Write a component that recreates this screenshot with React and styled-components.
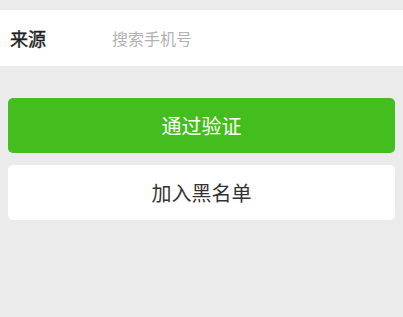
import styled, { createGlobalStyle } from "styled-components";

const Global = createGlobalStyle`
  html, body {
    margin: 0;
    padding: 0;
    background: #ebebeb;
    font-family: "Noto Sans CJK SC", "Noto Sans", sans-serif;
  }
`;

const Page = styled.div`
  padding-top: 10px;
  display: flex;
  flex-direction: column;
`;

const Row = styled.div`
  height: 56px;
  background: #fff;
  display: flex;
  align-items: center;
  padding-left: 10px;
`;

const Label = styled.span`
  width: 102px;
  font-size: 18px;
  font-weight: 400;
  color: #222;
  -webkit-text-stroke: 0.4px #222;
`;

const Search = styled.input`
  border: none;
  outline: none;
  padding: 0;
  background: transparent;
  font-family: inherit;
  font-size: 16px;
  color: #333;
  flex: 1;
  &::placeholder {
    color: #b2b2b2;
  }
`;

const Actions = styled.div`
  padding: 32px 8px 0;
  display: flex;
  flex-direction: column;
  gap: 12px;
`;

const Button = styled.button`
  height: 55px;
  border: none;
  border-radius: 5px;
  font-family: inherit;
  font-size: 20px;
  background: ${({ primary }) => (primary ? "#44be1e" : "#fff")};
  color: ${({ primary }) => (primary ? "#fff" : "#333")};
`;

export default function App() {
  return (
    <>
      <Global />
      <Page>
        <Row>
          <Label>来源</Label>
          <Search placeholder="搜索手机号" />
        </Row>
        <Actions>
          <Button primary>通过验证</Button>
          <Button>加入黑名单</Button>
        </Actions>
      </Page>
    </>
  );
}
